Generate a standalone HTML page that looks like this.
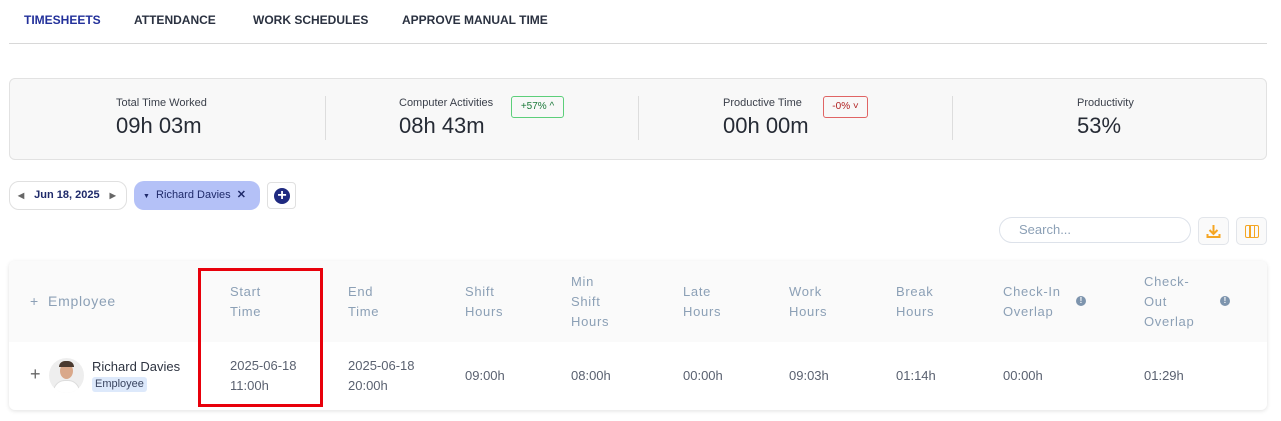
<!DOCTYPE html><html><head><style>
*{margin:0;padding:0;box-sizing:border-box}
body{width:1281px;height:421px;background:#fff;font-family:"Liberation Sans",sans-serif;position:relative;overflow:hidden;color:#2d3340}
.a{position:absolute;white-space:nowrap}
.tab{font-size:12px;font-weight:bold;color:#2a3140;top:13px}
.lab{font-size:11px;color:#3a3f4a;top:97px}
.val{font-size:22px;color:#262b35;top:113px}
.dv{position:absolute;top:96px;width:1px;height:44px;background:#ddd}
.h{font-size:13px;color:#8ca0b6;line-height:20px;letter-spacing:.7px}
.c{font-size:13px;color:#5a6170;line-height:20px}
.badge{font-size:10px;height:22px;line-height:20px;padding:0 4px;border-radius:3px;top:96px;text-align:center}
</style></head><body>
<div class="a tab" style="left:24px;color:#22309a">TIMESHEETS</div>
<div class="a tab" style="left:134px">ATTENDANCE</div>
<div class="a tab" style="left:253px">WORK SCHEDULES</div>
<div class="a tab" style="left:402px">APPROVE MANUAL TIME</div>
<div class="a" style="left:9px;top:43px;width:1258px;height:1px;background:#d8d8d8"></div>

<div class="a" style="left:9px;top:78px;width:1258px;height:82px;background:#f8f8f8;border:1px solid #e2e2e2;border-radius:6px"></div>
<div class="a lab" style="left:116px">Total Time Worked</div><div class="a val" style="left:116px">09h 03m</div>
<div class="dv" style="left:325px"></div>
<div class="a lab" style="left:399px">Computer Activities</div><div class="a val" style="left:399px">08h 43m</div>
<div class="a badge" style="left:511px;width:53px;border:1px solid #5ccf7a;color:#1c7a3a">+57% ^</div>
<div class="dv" style="left:638px"></div>
<div class="a lab" style="left:723px">Productive Time</div><div class="a val" style="left:723px">00h 00m</div>
<div class="a badge" style="left:823px;width:45px;border:1px solid #e06464;color:#b02020">-0% ˅</div>
<div class="dv" style="left:952px"></div>
<div class="a lab" style="left:1077px">Productivity</div><div class="a val" style="left:1077px">53%</div>

<div class="a" style="left:9px;top:181px;width:118px;height:29px;border:1px solid #e0e0e0;border-radius:10px;font-size:11px;font-weight:bold;color:#1f2a6a;line-height:27px"><span style="color:#666;font-size:8px;margin-left:8px">◀</span><span style="margin-left:10px">Jun 18, 2025</span><span style="color:#666;font-size:8px;margin-left:10px">▶</span></div>
<div class="a" style="left:134px;top:181px;width:126px;height:29px;background:#b4c1f7;border-radius:10px;font-size:11px;color:#1f2a6a;line-height:29px;padding-left:9px"><span style="font-size:7px">▼</span>&nbsp; Richard Davies &nbsp;<b>✕</b></div>
<div class="a" style="left:267px;top:182px;width:29px;height:27px;border:1px solid #e0e0e0;border-radius:4px"><div style="position:absolute;left:6px;top:5px;width:16px;height:16px;border-radius:50%;background:#1f2a80;color:#fff;font-size:16px;line-height:16px;text-align:center;font-weight:bold">+</div></div>

<div class="a" style="left:999px;top:217px;width:192px;height:26px;border:1px solid #dde2ea;border-radius:13px;font-size:13px;color:#8ca0b6;line-height:24px;padding-left:19px">Search...</div>
<div class="a" style="left:1198px;top:217px;width:31px;height:28px;border:1px solid #e2e5ea;border-radius:5px;background:#fafafa"><svg width="31" height="28" style="position:absolute;left:-1px;top:-1px"><path d="M15.5 8v9M11.5 13l4 4 4-4M9.5 17v3h12v-3" stroke="#f5a623" stroke-width="2" fill="none"/></svg></div>
<div class="a" style="left:1236px;top:217px;width:31px;height:28px;border:1px solid #e2e5ea;border-radius:5px;background:#fafafa"><div style="position:absolute;left:8px;top:7px;width:14px;height:13px;border:1.5px solid #f5a623;border-radius:2px"></div><div style="position:absolute;left:12px;top:7px;width:1.5px;height:13px;background:#f5a623"></div><div style="position:absolute;left:16.5px;top:7px;width:1.5px;height:13px;background:#f5a623"></div></div>

<div class="a" style="left:9px;top:261px;width:1258px;height:149px;border-radius:6px;background:#fff;box-shadow:0 1px 4px rgba(0,0,0,.12);overflow:hidden"><div style="height:81px;background:#fafafa"></div></div>
<div class="a h" style="left:30px;top:291px;font-size:14px">+ &nbsp;Employee</div>
<div class="a h" style="left:230px;top:282px">Start<br>Time</div>
<div class="a h" style="left:348px;top:282px">End<br>Time</div>
<div class="a h" style="left:465px;top:282px">Shift<br>Hours</div>
<div class="a h" style="left:571px;top:272px">Min<br>Shift<br>Hours</div>
<div class="a h" style="left:683px;top:282px">Late<br>Hours</div>
<div class="a h" style="left:789px;top:282px">Work<br>Hours</div>
<div class="a h" style="left:896px;top:282px">Break<br>Hours</div>
<div class="a h" style="left:1003px;top:282px">Check-In<br>Overlap</div>
<div class="a" style="left:1076px;top:296px;width:10px;height:10px;border-radius:50%;background:#7d94ad;color:#fff;font-size:8px;line-height:10px;text-align:center;font-weight:bold">!</div>
<div class="a h" style="left:1144px;top:272px">Check-<br>Out<br>Overlap</div>
<div class="a" style="left:1220px;top:296px;width:10px;height:10px;border-radius:50%;background:#7d94ad;color:#fff;font-size:8px;line-height:10px;text-align:center;font-weight:bold">!</div>

<div class="a" style="left:30px;top:364px;font-size:18px;color:#666">+</div>
<div class="a" style="left:49px;top:358px;width:35px;height:35px;border-radius:50%;background:#eee;overflow:hidden"><div style="position:absolute;left:11px;top:5px;width:13px;height:16px;border-radius:50%;background:#d9a88a"></div><div style="position:absolute;left:10px;top:3px;width:15px;height:6px;border-radius:6px 6px 0 0;background:#4a3a30"></div><div style="position:absolute;left:4px;top:22px;width:27px;height:15px;border-radius:12px 12px 0 0;background:#fff;border:1px solid #ddd"></div></div>
<div class="a" style="left:92px;top:359px;font-size:13px;color:#2d3340">Richard Davies</div>
<div class="a" style="left:92px;top:377px;font-size:11px;background:#dde9fb;color:#3a4560;padding:0 3px;border-radius:3px;line-height:15px">Employee</div>
<div class="a c" style="left:230px;top:356px">2025-06-18<br>11:00h</div>
<div class="a c" style="left:348px;top:356px">2025-06-18<br>20:00h</div>
<div class="a c" style="left:465px;top:366px">09:00h</div>
<div class="a c" style="left:571px;top:366px">08:00h</div>
<div class="a c" style="left:683px;top:366px">00:00h</div>
<div class="a c" style="left:789px;top:366px">09:03h</div>
<div class="a c" style="left:896px;top:366px">01:14h</div>
<div class="a c" style="left:1003px;top:366px">00:00h</div>
<div class="a c" style="left:1144px;top:366px">01:29h</div>

<div class="a" style="left:198px;top:268px;width:125px;height:139px;border:3px solid #e8000b"></div>
</body></html>
